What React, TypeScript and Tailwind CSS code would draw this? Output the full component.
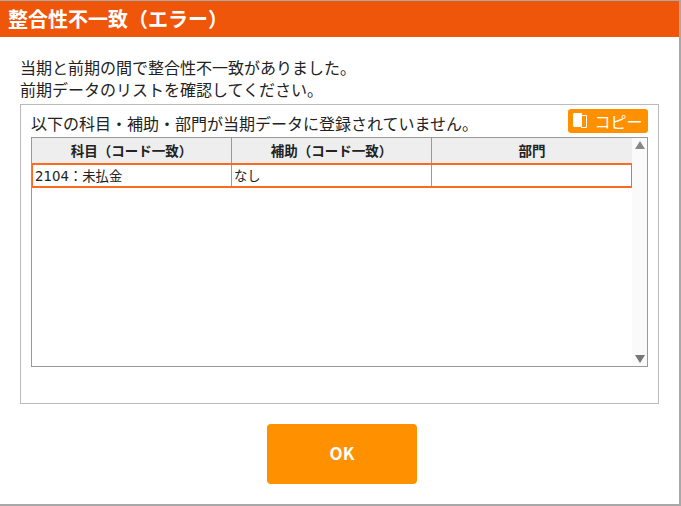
function CopyIcon() {
  return (
    <svg width="15" height="17" viewBox="0 0 15 17" className="shrink-0">
      <path d="M9 2.5h4.5v12H8" fill="none" stroke="#fff" strokeWidth="1" />
      <rect x="0" y="0" width="9" height="14" rx="1" fill="#fff" />
    </svg>
  );
}

export default function App() {
  return (
    <div className="flex h-[506px] w-[681px] flex-col overflow-hidden border-t border-r-2 border-b-2 border-[#a8a8a8] bg-white font-['Noto_Sans_CJK_JP','Noto_Sans',sans-serif] text-[#222]">
      <div className="flex h-9 shrink-0 items-center bg-[#f0560a] pl-2 text-[20px] leading-none font-bold text-white">
        整合性不一致（エラー）
      </div>

      <div className="flex flex-1 flex-col pt-[19px] pl-5">
        <p className="text-[16px] leading-[22px]">
          当期と前期の間で整合性不一致がありました。
          <br />
          前期データのリストを確認してください。
        </p>

        <div className="mt-[4px] flex h-[300px] w-[639px] flex-col border border-[#bbb] pt-1 pr-[10px] pl-[10px]">
          <div className="flex h-7 items-start justify-between">
            <span className="mt-[2px] text-[16px] leading-[24px]">
              以下の科目・補助・部門が当期データに登録されていません。
            </span>
            <button className="flex h-6 w-20 items-center justify-center gap-[6px] rounded-[3px] bg-[#ff9100] text-[16px] leading-none text-white">
              <CopyIcon />
              コピー
            </button>
          </div>

          <div className="flex h-[230px] border border-[#999]">
            <div className="w-[600px] shrink-0">
              <div className="grid h-[25px] grid-cols-[200px_200px_200px] bg-[#eeeeee] text-[13.5px] font-bold">
                <div className="flex items-center justify-center border-r border-[#999]">
                  科目（コード一致）
                </div>
                <div className="flex items-center justify-center border-r border-[#999]">
                  補助（コード一致）
                </div>
                <div className="flex items-center justify-center">部門</div>
              </div>
              <div className="grid h-[25px] grid-cols-[199px_200px_199px] border-t-2 border-r border-b-2 border-l border-[#ff6a21] font-['DejaVu_Sans','Noto_Sans_CJK_JP',sans-serif] text-[13.33px] leading-none">
                <div className="flex items-center border-r border-[#999] pt-[2px] pl-[2px]">
                  2104：未払金
                </div>
                <div className="flex items-center border-r border-[#999] pt-[2px] pl-[2px]">
                  なし
                </div>
                <div />
              </div>
            </div>
            <div className="flex flex-1 flex-col items-center justify-between bg-[#fafafa] py-[3px]">
              <svg width="10" height="8" viewBox="0 0 10 8">
                <path d="M5 0 10 8H0Z" fill="#888" />
              </svg>
              <svg width="10" height="8" viewBox="0 0 10 8">
                <path d="M0 0H10L5 8Z" fill="#777" />
              </svg>
            </div>
          </div>
        </div>

        <button className="mt-[20px] ml-[247px] h-[60px] w-[150px] rounded bg-[#ff9100] pb-[2px] text-[17px] font-bold text-white">
          OK
        </button>
      </div>
    </div>
  );
}
